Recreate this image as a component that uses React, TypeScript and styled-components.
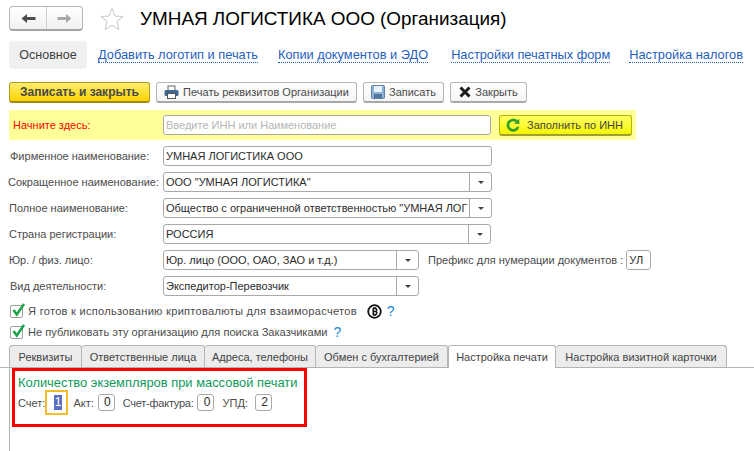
import React from 'react';
import styled, { createGlobalStyle } from 'styled-components';

const GlobalStyle = createGlobalStyle`
  html, body {
    margin: 0;
    padding: 0;
    background: #fff;
    font-family: "Liberation Sans", Arial, sans-serif;
    font-size: 11px;
    color: #4b4b4b;
  }
`;

const Page = styled.div`
  width: 754px;
  height: 451px;
  overflow: hidden;
  display: flex;
  flex-direction: column;
  background: #fff;
`;

const TitleBar = styled.div`
  display: flex;
  align-items: center;
  height: 25px;
  margin: 6px 0 0 9px;
`;

const NavGroup = styled.div`
  display: flex;
  width: 74px;
  height: 25px;
  box-sizing: border-box;
  border: 1px solid #b4b4b4;
  border-bottom: 2px solid #a4a4a4;
  border-radius: 4px;
  background: linear-gradient(#ffffff, #f1f1f1);
`;

const NavButton = styled.div<{ $first?: boolean }>`
  width: ${(p) => (p.$first ? 37 : 35)}px;
  display: flex;
  align-items: center;
  justify-content: center;
  border-right: ${(p) => (p.$first ? '1px solid #d0d0d0' : 'none')};
`;

const StarBox = styled.div`
  display: flex;
  margin: 0 16px 0 17px;
`;

const Title = styled.h1`
  margin: 0;
  font-size: 18.9px;
  line-height: 25px;
  font-weight: 400;
  color: #000;
  white-space: nowrap;
`;

const SectionBar = styled.div`
  display: flex;
  align-items: center;
  height: 28px;
  margin: 10px 0 0 9px;
`;

const ActiveSection = styled.div`
  height: 28px;
  width: 78px;
  box-sizing: border-box;
  display: flex;
  align-items: center;
  justify-content: center;
  background: #f0f0f0;
  border-radius: 4px;
  font-size: 12.5px;
  color: #3c3c3c;
`;

const SectionLink = styled.a<{ $left: number }>`
  margin-left: ${(p) => p.$left}px;
  font-size: 12.8px;
  line-height: 14px;
  color: #1f5fbf;
  border-bottom: 1px dotted #1f5fbf;
  white-space: nowrap;
`;

const CommandBar = styled.div`
  display: flex;
  gap: 6px;
  height: 21px;
  margin: 13px 0 0 9px;
`;

const CommandButton = styled.div<{ $width: number; $primary?: boolean }>`
  width: ${(p) => p.$width}px;
  height: 21px;
  box-sizing: border-box;
  display: flex;
  align-items: center;
  justify-content: center;
  gap: 4px;
  border: 1px solid ${(p) => (p.$primary ? '#b19a1e' : '#b6b6b6')};
  border-bottom: 2px solid ${(p) => (p.$primary ? '#a08a12' : '#a8a8a8')};
  border-radius: 3px;
  background: ${(p) =>
    p.$primary ? 'linear-gradient(#fdec6c, #fbd400)' : 'linear-gradient(#ffffff, #f4f4f4)'};
  color: #4a4a4a;
  font-size: ${(p) => (p.$primary ? 12 : 11)}px;
  font-weight: ${(p) => (p.$primary ? 700 : 400)};
  white-space: nowrap;
`;

const StartBand = styled.div`
  display: flex;
  align-items: center;
  width: 627px;
  height: 30px;
  margin: 7px 0 0 9px;
  background: #ffff99;
`;

const StartLabel = styled.span`
  width: 154px;
  padding-left: 4px;
  box-sizing: border-box;
  color: #ff0000;
`;

const FillButton = styled.div`
  width: 133px;
  height: 21px;
  margin-left: 8px;
  box-sizing: border-box;
  display: flex;
  align-items: center;
  padding-left: 6px;
  gap: 7px;
  border: 1px solid #b6b600;
  border-bottom: 2px solid #a0a030;
  border-radius: 3px;
  background: linear-gradient(#ffff66, #f5f500);
  color: #444;
  white-space: nowrap;
`;

const Form = styled.div`
  display: flex;
  flex-direction: column;
  gap: 6px;
  margin-top: 6px;
`;

const Row = styled.div`
  display: flex;
  align-items: center;
  height: 20px;
`;

const Label = styled.span<{ $indent?: number }>`
  width: 163px;
  box-sizing: border-box;
  padding-left: ${(p) => p.$indent ?? 9}px;
  white-space: nowrap;
`;

const Field = styled.div<{ $width: number }>`
  width: ${(p) => p.$width}px;
  height: 20px;
  box-sizing: border-box;
  display: flex;
  align-items: stretch;
  flex: none;
  border: 1px solid #a9a9a9;
  border-radius: 3px;
  background: #fff;
  overflow: hidden;
`;

const FieldText = styled.div<{ $muted?: boolean }>`
  flex: 1;
  min-width: 0;
  padding-left: 2px;
  line-height: 18px;
  color: ${(p) => (p.$muted ? '#b5b5b5' : '#2c2c2c')};
  white-space: nowrap;
  overflow: hidden;
`;

const DropButton = styled.div`
  width: 21px;
  flex: none;
  display: flex;
  align-items: center;
  justify-content: center;
  border-left: 1px solid #a9a9a9;
  &::before {
    content: '';
    border-left: 3px solid transparent;
    border-right: 3px solid transparent;
    border-top: 3px solid #444;
  }
`;

const PrefixLabel = styled.span`
  margin: 0 3px 0 9px;
  white-space: nowrap;
`;

const CheckRow = styled.div<{ $top: number; $spacing?: number }>`
  display: flex;
  align-items: center;
  height: 16px;
  margin: ${(p) => p.$top}px 0 0 10px;
  font-size: 11.1px;
  letter-spacing: ${(p) => p.$spacing ?? 0}px;
  white-space: nowrap;
`;

const CheckBox = styled.div`
  width: 13px;
  height: 13px;
  box-sizing: border-box;
  border: 1px solid #a0a0a0;
  border-radius: 2px;
  margin-right: 5px;
  position: relative;
  flex: none;
  svg {
    position: absolute;
    left: 0;
    top: -3px;
  }
`;

const Help = styled.span<{ $left: number }>`
  margin-left: ${(p) => p.$left}px;
  color: #1c8ad6;
  font-size: 14px;
`;

const TabStrip = styled.div`
  display: flex;
  height: 23px;
  margin-top: 5px;
  padding-left: 9px;
  box-sizing: border-box;
  border-bottom: 1px solid #b4b4b4;
`;

const Tab = styled.div<{ $width: number; $active?: boolean }>`
  width: ${(p) => p.$width}px;
  height: ${(p) => (p.$active ? 23 : 22)}px;
  box-sizing: border-box;
  display: flex;
  align-items: center;
  justify-content: center;
  border: 1px solid #b4b4b4;
  border-left-width: ${(p) => (p.$active ? 1 : 0)}px;
  border-bottom: 0;
  border-radius: 3px 3px 0 0;
  background: ${(p) => (p.$active ? '#fff' : '#ececec')};
  color: #444;
  white-space: nowrap;
  &:first-child {
    border-left-width: 1px;
  }
`;

const TabBody = styled.div`
  flex: 1;
  margin-left: 9px;
  border-left: 1px solid #b4b4b4;
  padding-left: 2px;
`;

const Highlight = styled.div`
  width: 295px;
  height: 59px;
  box-sizing: border-box;
  border: 3px solid #ff0000;
  padding: 4px 0 0 3px;
`;

const GroupTitle = styled.div`
  color: #109a5a;
  font-size: 12.9px;
  line-height: 15px;
  white-space: nowrap;
`;

const CopiesRow = styled.div`
  display: flex;
  align-items: center;
  height: 25px;
`;

const CopyLabel = styled.span<{ $left?: number; $tight?: boolean }>`
  margin-left: ${(p) => p.$left ?? 0}px;
  letter-spacing: ${(p) => (p.$tight ? -0.25 : 0)}px;
  white-space: nowrap;
`;

const CopyField = styled.div<{ $left: number }>`
  width: 17px;
  height: 17px;
  margin-left: ${(p) => p.$left}px;
  box-sizing: border-box;
  border: 1px solid #a9a9a9;
  border-radius: 3px;
  text-align: right;
  padding-right: 3px;
  line-height: 15px;
  font-size: 12px;
  color: #2c2c2c;
`;

const FocusedField = styled.div`
  width: 23px;
  height: 25px;
  box-sizing: border-box;
  border: 2px solid #f5bd2c;
  display: flex;
  align-items: center;
  justify-content: flex-end;
  padding-right: 4px;
  font-size: 12px;
`;

const Selected = styled.span`
  background: #5a6fc4;
  color: #fff;
  line-height: 15px;
  padding: 0 1px;
`;

const Arrow = ({ color, flip }: { color: string; flip?: boolean }) => (
  <svg width="15" height="11" viewBox="0 0 15 11" style={flip ? { transform: 'scaleX(-1)' } : undefined}>
    <path d="M0.5 5.5 L6 1 V4 H14.5 V7 H6 V10 Z" fill={color} />
  </svg>
);

const Star = () => (
  <svg width="24" height="24" viewBox="0 0 24 24">
    <path
      d="M12 1.5 L15 9 L23 9.6 L16.8 14.6 L18.9 22.5 L12 18.2 L5.1 22.5 L7.2 14.6 L1 9.6 L9 9 Z"
      fill="#fff"
      stroke="#c4c8cc"
    />
  </svg>
);

const PrinterIcon = () => (
  <svg width="15" height="14" viewBox="0 0 15 14">
    <rect x="4" y="1" width="7" height="5" fill="#fff" stroke="#666" />
    <rect x="0.5" y="5" width="14" height="6" rx="1.5" fill="#3f6791" />
    <rect x="3.5" y="8.5" width="8" height="5" fill="#fff" stroke="#555" />
  </svg>
);

const SaveIcon = () => (
  <svg width="14" height="14" viewBox="0 0 14 14">
    <rect x="0.5" y="0.5" width="13" height="13" rx="1" fill="#8db2d6" stroke="#5d83aa" />
    <rect x="3" y="1" width="8" height="6" fill="#e9f0f7" />
    <rect x="3" y="9" width="8" height="4" fill="#55779c" />
  </svg>
);

const CloseIcon = () => (
  <svg width="12" height="12" viewBox="0 0 12 12">
    <path d="M1.5 1.5 L10.5 10.5 M10.5 1.5 L1.5 10.5" stroke="#1c1c1c" strokeWidth="3" />
  </svg>
);

const RefreshIcon = () => (
  <svg width="14" height="14" viewBox="0 0 14 14" fill="none">
    <path d="M10.8 3.4 A5.2 5.2 0 1 0 12.1 8.8" stroke="#2fa02c" strokeWidth="2.6" />
    <path d="M8 5.6 L13.4 6 L13.2 0.8 Z" fill="#2fa02c" />
  </svg>
);

const Check = () => (
  <svg width="15" height="15" viewBox="0 0 15 15" fill="none">
    <path d="M2.5 7 L5.8 11.5 L13 1" stroke="#1da34c" strokeWidth="2.6" />
  </svg>
);

const BitcoinIcon = () => (
  <svg width="15" height="15" viewBox="0 0 15 15" style={{ marginLeft: 10 }}>
    <circle cx="7.5" cy="7.5" r="6.3" fill="#fff" stroke="#111" strokeWidth="1.8" />
    <path
      d="M5.6 4.4 H8.2 A1.5 1.5 0 0 1 8.2 7.4 H5.6 M8.2 7.4 A1.6 1.6 0 0 1 8.4 10.6 H5.6 M6.2 4.4 V10.6 M6.8 3.2 V4.4 M8.4 3.2 V4.4 M6.8 10.6 V11.8 M8.4 10.6 V11.8"
      fill="none"
      stroke="#111"
      strokeWidth="1.5"
    />
  </svg>
);

const rows = [
  { label: 'Фирменное наименование:', value: 'УМНАЯ ЛОГИСТИКА ООО', width: 329, indent: 10 },
  { label: 'Сокращенное наименование:', value: 'ООО "УМНАЯ ЛОГИСТИКА"', width: 329, drop: true, indent: 8 },
  {
    label: 'Полное наименование:',
    value: 'Общество с ограниченной ответственностью "УМНАЯ ЛОГ',
    width: 329,
    drop: true,
  },
  { label: 'Страна регистрации:', value: 'РОССИЯ', width: 328, drop: true },
];

const tabs = [
  { name: 'Реквизиты', width: 73 },
  { name: 'Ответственные лица', width: 123 },
  { name: 'Адреса, телефоны', width: 111 },
  { name: 'Обмен с бухгалтерией', width: 132 },
  { name: 'Настройка печати', width: 108, active: true },
  { name: 'Настройка визитной карточки', width: 171 },
];

const App = () => (
  <Page>
    <GlobalStyle />
    <TitleBar>
      <NavGroup>
        <NavButton $first>
          <Arrow color="#4d4d4d" />
        </NavButton>
        <NavButton>
          <Arrow color="#a8a8a8" flip />
        </NavButton>
      </NavGroup>
      <StarBox>
        <Star />
      </StarBox>
      <Title>УМНАЯ ЛОГИСТИКА ООО (Организация)</Title>
    </TitleBar>

    <SectionBar>
      <ActiveSection>Основное</ActiveSection>
      <SectionLink $left={11}>Добавить логотип и печать</SectionLink>
      <SectionLink $left={20}>Копии документов и ЭДО</SectionLink>
      <SectionLink $left={23}>Настройки печатных форм</SectionLink>
      <SectionLink $left={19}>Настройка налогов</SectionLink>
    </SectionBar>

    <CommandBar>
      <CommandButton $width={141} $primary>
        Записать и закрыть
      </CommandButton>
      <CommandButton $width={201}>
        <PrinterIcon />
        Печать реквизитов Организации
      </CommandButton>
      <CommandButton $width={81}>
        <SaveIcon />
        Записать
      </CommandButton>
      <CommandButton $width={77}>
        <CloseIcon />
        Закрыть
      </CommandButton>
    </CommandBar>

    <StartBand>
      <StartLabel>Начните здесь:</StartLabel>
      <Field $width={328}>
        <FieldText $muted>Введите ИНН или Наименование</FieldText>
      </Field>
      <FillButton>
        <RefreshIcon />
        Заполнить по ИНН
      </FillButton>
    </StartBand>

    <Form>
      {rows.map((row) => (
        <Row key={row.label}>
          <Label $indent={row.indent}>{row.label}</Label>
          <Field $width={row.width}>
            <FieldText>{row.value}</FieldText>
            {row.drop && <DropButton />}
          </Field>
        </Row>
      ))}
      <Row>
        <Label>Юр. / физ. лицо:</Label>
        <Field $width={256}>
          <FieldText>Юр. лицо (ООО, ОАО, ЗАО и т.д.)</FieldText>
          <DropButton />
        </Field>
        <PrefixLabel>Префикс для нумерации документов :</PrefixLabel>
        <Field $width={25}>
          <FieldText>УЛ</FieldText>
        </Field>
      </Row>
      <Row>
        <Label $indent={10}>Вид деятельности:</Label>
        <Field $width={256}>
          <FieldText>Экспедитор-Перевозчик</FieldText>
          <DropButton />
        </Field>
      </Row>
    </Form>

    <CheckRow $top={7} $spacing={0.27}>
      <CheckBox>
        <Check />
      </CheckBox>
      Я готов к использованию криптовалюты для взаиморасчетов
      <BitcoinIcon />
      <Help $left={5}>?</Help>
    </CheckRow>
    <CheckRow $top={5}>
      <CheckBox>
        <Check />
      </CheckBox>
      Не публиковать эту организацию для поиска Заказчиками
      <Help $left={6}>?</Help>
    </CheckRow>

    <TabStrip>
      {tabs.map((tab) => (
        <Tab key={tab.name} $width={tab.width} $active={tab.active}>
          {tab.name}
        </Tab>
      ))}
    </TabStrip>
    <TabBody>
      <Highlight>
        <GroupTitle>Количество экземпляров при массовой печати</GroupTitle>
        <CopiesRow>
          <CopyLabel>Счет:</CopyLabel>
          <FocusedField>
            <Selected>1</Selected>
          </FocusedField>
          <CopyLabel $left={5}>Акт:</CopyLabel>
          <CopyField $left={4}>0</CopyField>
          <CopyLabel $left={8} $tight>
            Счет-фактура:
          </CopyLabel>
          <CopyField $left={4}>0</CopyField>
          <CopyLabel $left={8}>УПД:</CopyLabel>
          <CopyField $left={7}>2</CopyField>
        </CopiesRow>
      </Highlight>
    </TabBody>
  </Page>
);

export default App;
